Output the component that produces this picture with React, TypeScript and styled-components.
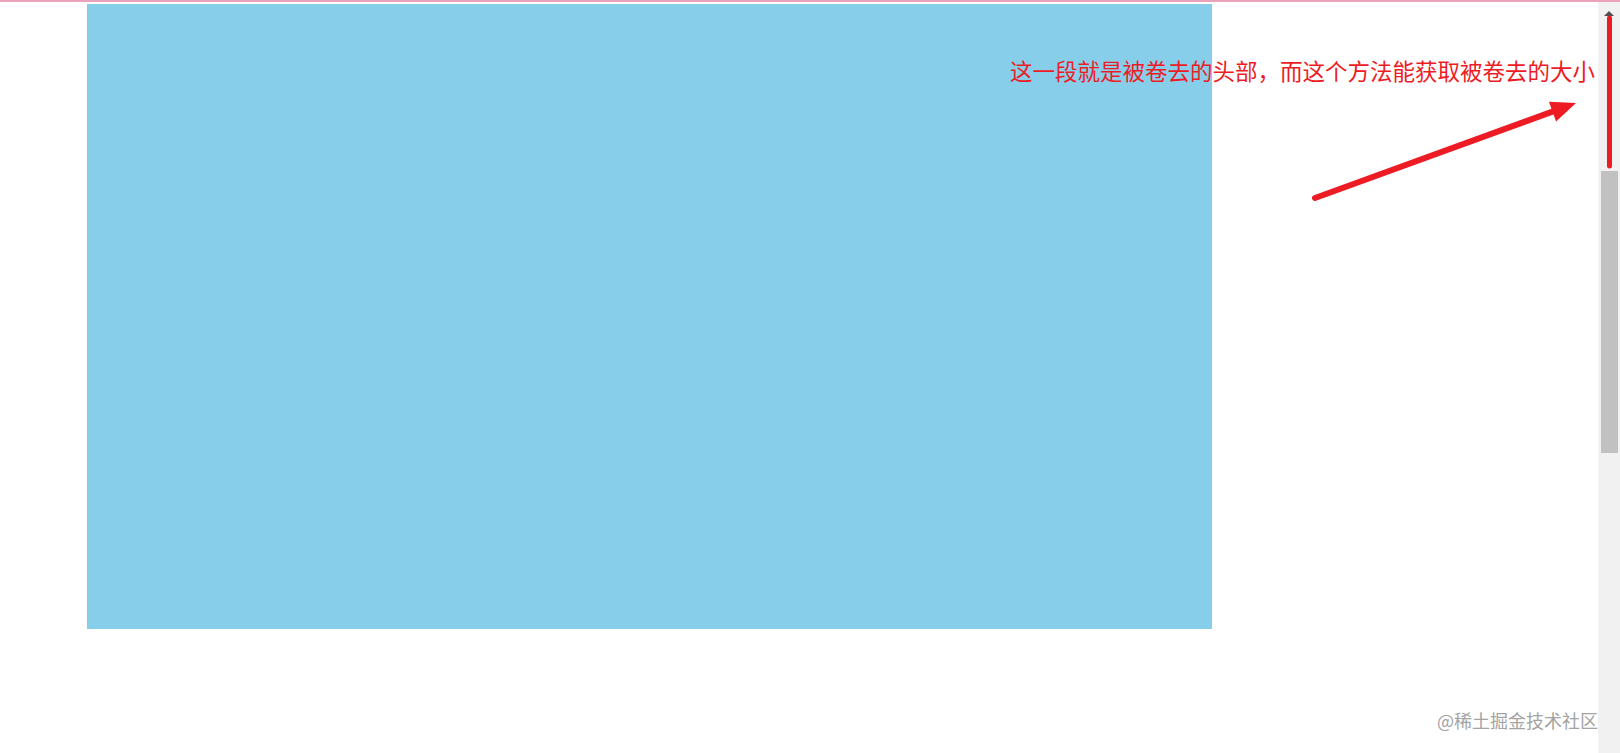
import React from "react";
import styled, { createGlobalStyle } from "styled-components";

const GlobalStyle = createGlobalStyle`
  html, body {
    margin: 0;
    padding: 0;
    background: #ffffff;
    overflow: hidden;
  }
  body {
    font-family: "Noto Sans CJK SC", "Noto Sans", sans-serif;
  }
`;

const Frame = styled.div`
  position: relative;
  width: 1620px;
  height: 753px;
  display: flex;
  flex-direction: column;
  overflow: hidden;
  background: #ffffff;
`;

const TopRule = styled.div`
  height: 2px;
  flex: none;
  background: #eba3bb;
`;

const Viewport = styled.div`
  flex: 1;
  display: flex;
  flex-direction: row;
  min-height: 0;
`;

const Content = styled.main`
  flex: 1;
  padding: 2px 0 0 87px;
`;

const Block = styled.div`
  width: 1125px;
  height: 625px;
  background: #87ceeb;
`;

const ScrollTrack = styled.div`
  width: 22px;
  flex: none;
  background: #f1f1f1;
  display: flex;
  flex-direction: column;
  align-items: center;
`;

const ScrollArrow = styled.div`
  margin-top: 9px;
  width: 0;
  height: 0;
  border-left: 5px solid transparent;
  border-right: 5px solid transparent;
  border-bottom: 5px solid #505050;
`;

const ScrollThumb = styled.div`
  margin-top: 155px;
  margin-left: 1px;
  width: 17px;
  height: 282px;
  background: #c1c1c1;
`;

const Note = styled.div`
  position: absolute;
  left: 1010px;
  top: 56px;
  font-size: 22.5px;
  line-height: 28px;
  color: #ed1c24;
  white-space: nowrap;
  font-family: "Noto Sans CJK SC", sans-serif;
`;

const Watermark = styled.div`
  position: absolute;
  left: 1437px;
  top: 709px;
  font-size: 18px;
  line-height: 22px;
  color: #a3a3a3;
  white-space: nowrap;
  font-family: "Noto Sans CJK SC", sans-serif;
`;

const Overlay = styled.svg`
  position: absolute;
  left: 0;
  top: 0;
  width: 1620px;
  height: 753px;
  pointer-events: none;
`;

// Arrow from a tail point to a tip, with a filled triangular head.
function arrowHead(tx: number, ty: number, hx: number, hy: number, len: number, half: number) {
  const dx = hx - tx;
  const dy = hy - ty;
  const d = Math.hypot(dx, dy);
  const ux = dx / d;
  const uy = dy / d;
  const bx = hx - ux * len;
  const by = hy - uy * len;
  const px = -uy;
  const py = ux;
  return {
    base: [bx, by],
    points: `${hx},${hy} ${bx + px * half},${by + py * half} ${bx - px * half},${by - py * half}`,
  };
}

export default function App() {
  const tail = [1315, 198];
  const tip = [1576, 103];
  const head = arrowHead(tail[0], tail[1], tip[0], tip[1], 25, 10.5);

  return (
    <>
      <GlobalStyle />
      <Frame>
        <TopRule />
        <Viewport>
          <Content>
            <Block />
          </Content>
          <ScrollTrack>
            <ScrollArrow />
            <ScrollThumb />
          </ScrollTrack>
        </Viewport>

        <Note>这一段就是被卷去的头部，而这个方法能获取被卷去的大小</Note>

        <Overlay viewBox="0 0 1620 753">
          <line
            x1={tail[0]}
            y1={tail[1]}
            x2={head.base[0] + 2}
            y2={head.base[1] - 0.7}
            stroke="#ed1c24"
            strokeWidth={6}
            strokeLinecap="round"
          />
          <polygon points={head.points} fill="#ed1c24" />
          <line
            x1={1609.5}
            y1={18}
            x2={1609.5}
            y2={166}
            stroke="#ed1c24"
            strokeWidth={5}
            strokeLinecap="round"
          />
        </Overlay>

        <Watermark>@稀土掘金技术社区</Watermark>
      </Frame>
    </>
  );
}
